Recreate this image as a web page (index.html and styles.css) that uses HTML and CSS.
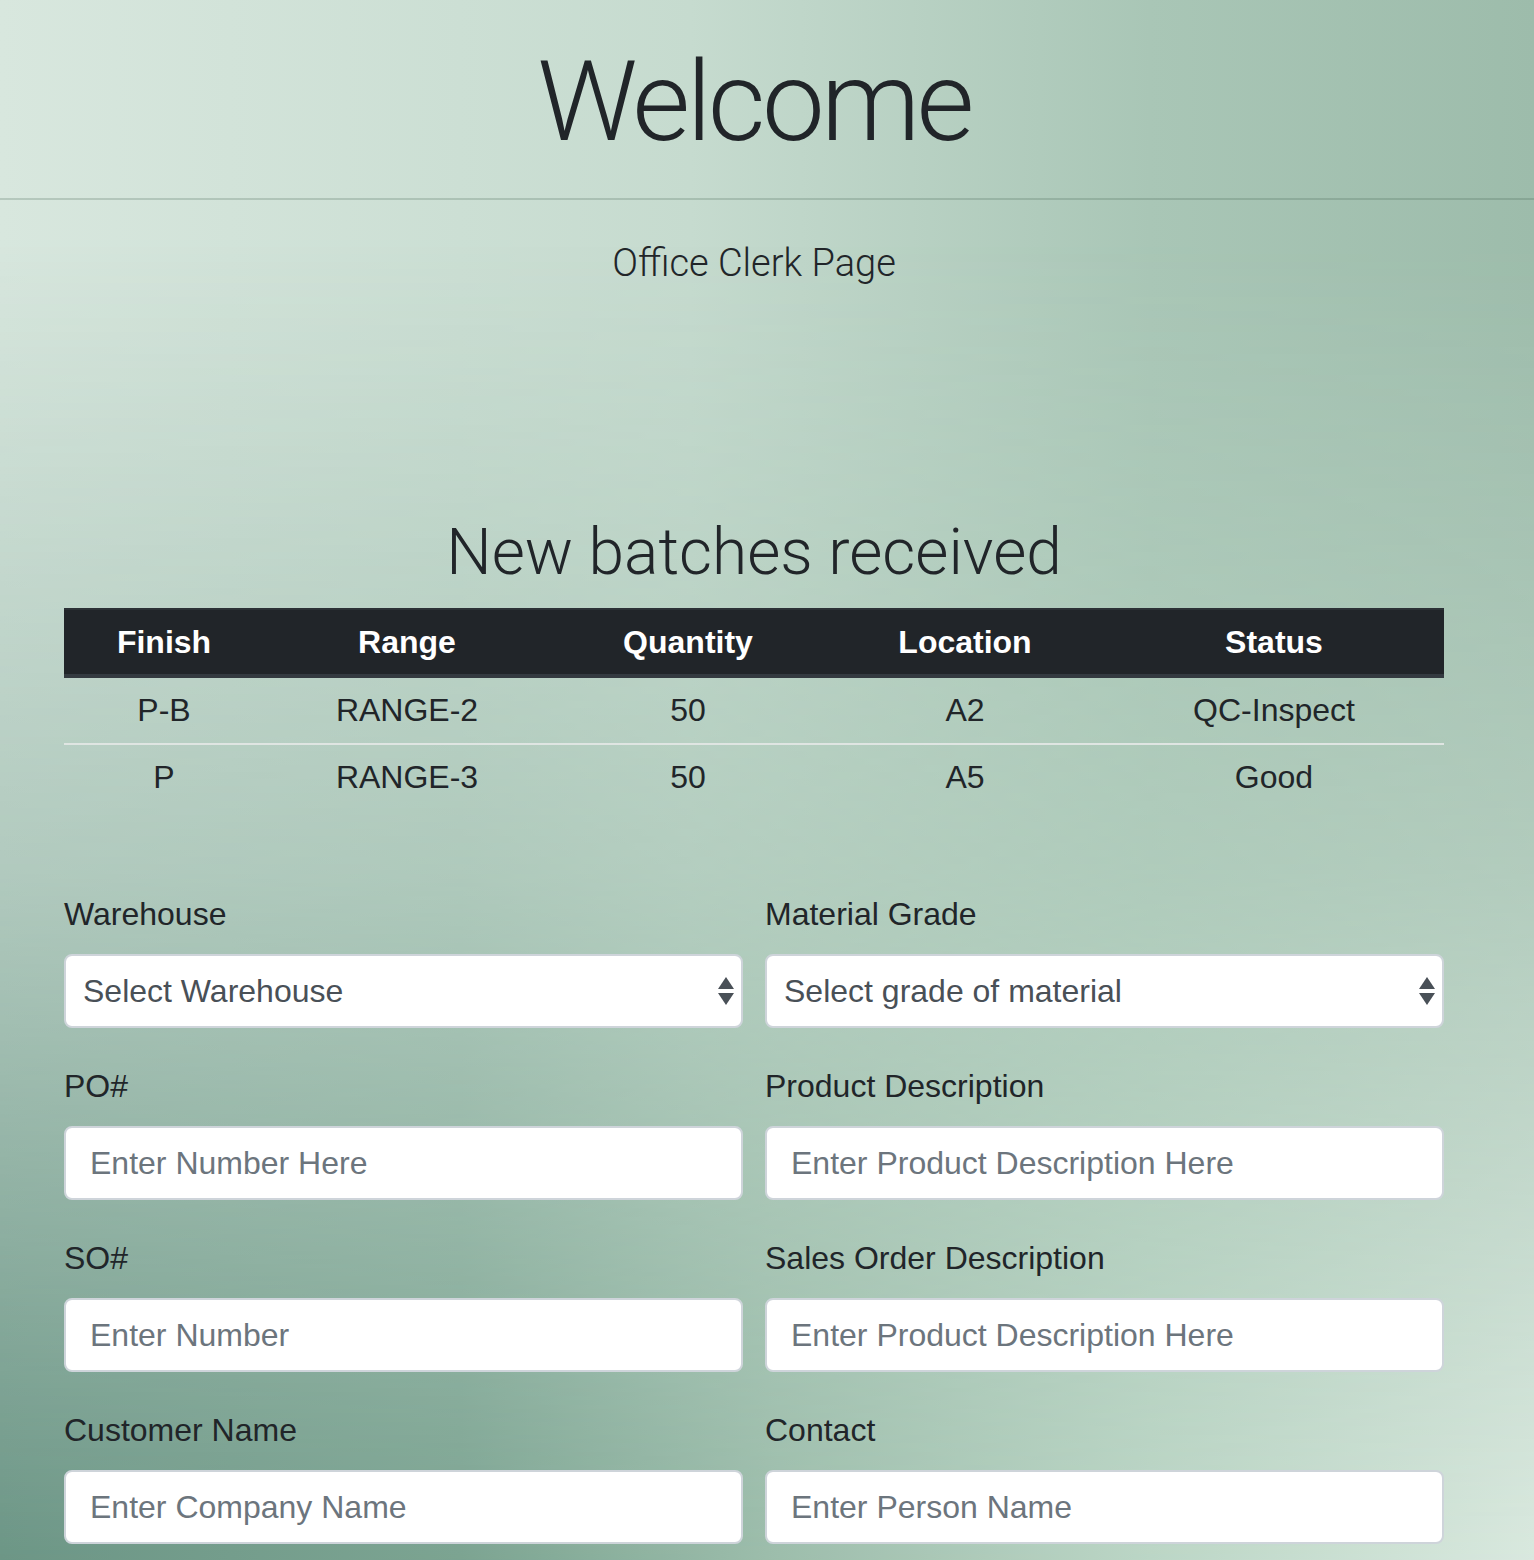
FILE: index.html
```html
<!DOCTYPE html>
<html lang="en">
<head>
<meta charset="utf-8">
<title>Office Clerk Page</title>
<link rel="stylesheet" href="styles.css">
</head>
<body>
<div class="bg-fade"></div>
<header class="hero">
  <h1 class="hero-title">Welcome</h1>
</header>
<p class="lead">Office Clerk Page</p>

<main class="content">
  <h2 class="section-title">New batches received</h2>
  <table class="batches">
    <colgroup>
      <col class="c1"><col class="c2"><col class="c3"><col class="c4"><col class="c5">
    </colgroup>
    <thead>
      <tr><th>Finish</th><th>Range</th><th>Quantity</th><th>Location</th><th>Status</th></tr>
    </thead>
    <tbody>
      <tr><td>P-B</td><td>RANGE-2</td><td>50</td><td>A2</td><td>QC-Inspect</td></tr>
      <tr><td>P</td><td>RANGE-3</td><td>50</td><td>A5</td><td>Good</td></tr>
    </tbody>
  </table>

  <form class="form-grid">
    <div class="field">
      <label class="label">Warehouse</label>
      <div class="select-wrap">
        <div class="select">Select Warehouse</div>
        <svg class="arrows" width="16" height="28" viewBox="0 0 16 28"><path d="M8 0 L16 12 L0 12 Z" fill="#495057"/><path d="M0 16 L16 16 L8 28 Z" fill="#495057"/></svg>
      </div>
    </div>
    <div class="field">
      <label class="label">Material Grade</label>
      <div class="select-wrap">
        <div class="select">Select grade of material</div>
        <svg class="arrows" width="16" height="28" viewBox="0 0 16 28"><path d="M8 0 L16 12 L0 12 Z" fill="#495057"/><path d="M0 16 L16 16 L8 28 Z" fill="#495057"/></svg>
      </div>
    </div>
    <div class="field">
      <label class="label">PO#</label>
      <input class="input" type="text" placeholder="Enter Number Here">
    </div>
    <div class="field">
      <label class="label">Product Description</label>
      <input class="input" type="text" placeholder="Enter Product Description Here">
    </div>
    <div class="field">
      <label class="label">SO#</label>
      <input class="input" type="text" placeholder="Enter Number">
    </div>
    <div class="field">
      <label class="label">Sales Order Description</label>
      <input class="input" type="text" placeholder="Enter Product Description Here">
    </div>
    <div class="field">
      <label class="label">Customer Name</label>
      <input class="input" type="text" placeholder="Enter Company Name">
    </div>
    <div class="field">
      <label class="label">Contact</label>
      <input class="input" type="text" placeholder="Enter Person Name">
    </div>
  </form>
</main>
</body>
</html>
```

FILE: styles.css
```css
html, body {
  margin: 0;
  padding: 0;
}
body {
  position: relative;
  min-height: 1560px;
  overflow: hidden;
  font-family: "Liberation Sans", Arial, sans-serif;
  color: #212529;
  background: linear-gradient(to right, #d8e7de 0%, #c6dbcf 45%, #a9c6b6 75%, #9dbcab 100%);
}
.bg-fade {
  position: absolute;
  inset: 0;
  background: linear-gradient(to right, #6a9484 0%, #7aa290 30%, #9bbcaa 50%, #bcd6c6 75%, #dae9df 100%);
  -webkit-mask-image: linear-gradient(to bottom, transparent 15%, rgba(0,0,0,.35) 55%, #000 100%);
  mask-image: linear-gradient(to bottom, transparent 15%, rgba(0,0,0,.35) 55%, #000 100%);
  z-index: 0;
}
.hero, .lead, .content {
  position: relative;
  z-index: 1;
}
.hero {
  border-bottom: 2px solid rgba(60, 90, 75, 0.22);
  width: 1534px;
  height: 198px;
}
.hero-title {
  margin: 0;
  width: 1508px;
  padding-top: 38px;
  text-align: center;
  font-family: Roboto, "Liberation Sans", sans-serif;
  font-weight: 300;
  font-size: 112px;
  line-height: 128px;
  letter-spacing: -3.7px;
}
.lead {
  margin: 0;
  width: 1508px;
  padding-top: 39px;
  text-align: center;
  font-family: Roboto, "Liberation Sans", sans-serif;
  font-weight: 300;
  font-size: 38px;
  line-height: 48px;
}
.content {
  width: 1380px;
  margin-left: 64px;
}
.section-title {
  margin: 226px 0 0;
  text-align: center;
  font-family: Roboto, "Liberation Sans", sans-serif;
  font-weight: 300;
  font-size: 64px;
  line-height: 80px;
  height: 80px;
  padding-bottom: 15px;
}
.batches {
  width: 1380px;
  border-collapse: collapse;
  table-layout: fixed;
  font-size: 32px;
}
.c1 { width: 200px; }
.c2 { width: 286px; }
.c3 { width: 276px; }
.c4 { width: 278px; }
.c5 { width: 340px; }
.batches th {
  background: #212529;
  color: #fff;
  font-weight: 700;
  height: 64px;
  padding: 0;
  text-align: center;
  border-top: 2px solid #2c3136;
  border-bottom: 4px solid #343a40;
}
.batches td {
  height: 65px;
  padding: 0;
  text-align: center;
  color: #212529;
}
.batches tbody tr + tr td {
  border-top: 2px solid #dfe5e2;
}
.form-grid {
  display: grid;
  grid-template-columns: 679px 679px;
  column-gap: 22px;
  margin-top: 80px;
}
.field {
  display: flex;
  flex-direction: column;
  margin-bottom: 34px;
}
.label {
  font-size: 32px;
  line-height: 48px;
  margin-bottom: 16px;
  color: #212529;
}
.select-wrap {
  position: relative;
}
.select, .input {
  box-sizing: border-box;
  height: 74px;
  width: 100%;
  background: #fff;
  border: 2px solid #ced4da;
  border-radius: 8px;
  font-family: "Liberation Sans", Arial, sans-serif;
  font-size: 32px;
  color: #495057;
}
.select {
  display: flex;
  align-items: center;
  padding-left: 17px;
}
.input {
  padding: 0 24px;
  outline: none;
}
.input::placeholder {
  color: #6c757d;
}
.arrows {
  position: absolute;
  right: 9px;
  top: 23px;
}
```
